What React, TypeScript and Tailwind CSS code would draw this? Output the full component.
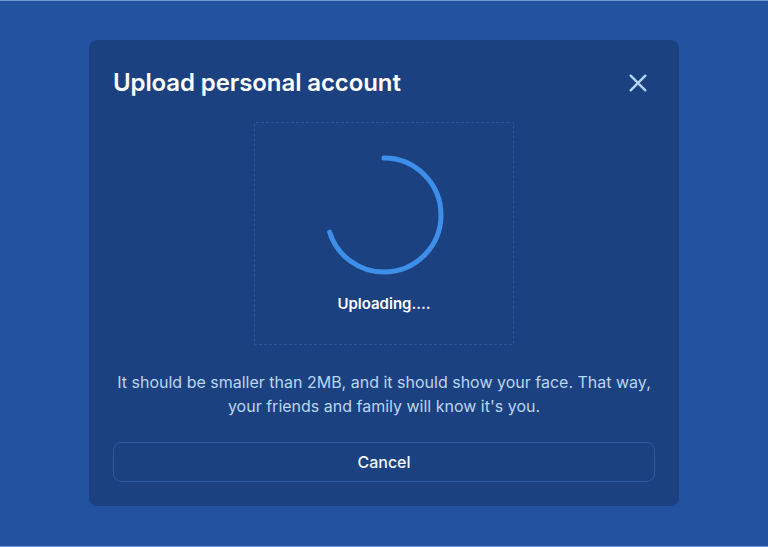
import React from "react";

export default function App() {
  const r = 57;
  const c = 2 * Math.PI * r;
  const frac = 0.7;
  return (
    <div
      className="h-[547px] w-full bg-[#2353a0] border-t border-b border-[#6f98d6] flex justify-center"
      style={{ fontFamily: "Inter, 'Noto Sans', sans-serif" }}
    >
      <div className="mt-[39px] w-[590px] h-[466px] rounded-lg bg-[#1b4180] px-6 pt-6 pb-6 flex flex-col">
        <div className="flex items-center justify-between h-9 pt-[2px]">
          <h1 className="text-[24px] leading-9 font-semibold text-white tracking-[-0.1px]">
            Upload personal account
          </h1>
          <button className="mr-[6px] text-[#b3d6f7]">
            <svg width="22" height="22" viewBox="0 0 24 24" fill="none" stroke="currentColor" strokeWidth="2.6" strokeLinecap="round">
              <path d="M4 4L20 20M20 4L4 20" />
            </svg>
          </button>
        </div>
        <div className="mt-[22px] self-center w-[260px] h-[224px] border border-dashed border-[#2d5797] rounded-[2px] flex flex-col items-center">
          <svg width="124" height="124" viewBox="0 0 124 124" className="mt-[30px]">
            <circle
              cx="62"
              cy="62"
              r={r}
              fill="none"
              stroke="#3d8fe9"
              strokeWidth="5"
              strokeLinecap="round"
              strokeDasharray={`${c * frac} ${c}`}
              transform="rotate(-90 62 62)"
            />
          </svg>
          <div className="mt-[17px] text-[15px] leading-5 font-semibold text-white">Uploading....</div>
        </div>
        <p className="mt-[25px] text-center text-[16px] leading-6 text-[#bcd5f2]">
          It should be smaller than 2MB, and it should show your face. That way, your friends and family will know it's you.
        </p>
        <button className="mt-6 h-[40px] w-full rounded-lg border border-[#2d5aa0] text-[16px] font-medium text-[#f3f7fd]">
          Cancel
        </button>
      </div>
    </div>
  );
}
